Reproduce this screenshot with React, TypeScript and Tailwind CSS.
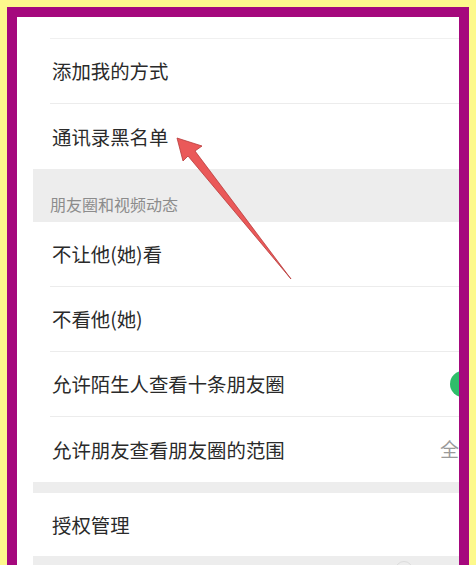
import React from 'react'

const font = { fontFamily: '"Noto Sans CJK SC", "Noto Sans", sans-serif' }

function Row({ label, last, right }: { label: string; last?: boolean; right?: React.ReactNode }) {
  return (
    <div className="bg-white pl-[17px]">
      <div
        className={`flex h-[65px] items-center justify-between pl-[2px] ${
          last ? '' : 'border-b border-[#ececec]'
        }`}
      >
        <span className="text-[19.4px] text-[#2a2a2a]">{label}</span>
        {right}
      </div>
    </div>
  )
}

export default function App() {
  return (
    <div className="relative h-[565px] w-[476px] overflow-hidden bg-[#fdf98c] px-[7px] pt-[7px]" style={font}>
      <div className="h-full bg-[#a5087d] px-[10px] pt-[10px]">
        <div className="h-full overflow-hidden bg-white pl-[16px]">
          {/* partial row at the top */}
          <div className="bg-white pl-[17px]">
            <div className="h-[22px] border-b border-[#f0f0f0]" />
          </div>
          <Row label="添加我的方式" />
          <Row label="通讯录黑名单" last />

          <div className="flex h-[53px] items-end bg-[#ededed] pb-[6px] pl-[17px]">
            <span className="text-[16px] text-[#8c8c8c]">朋友圈和视频动态</span>
          </div>

          <Row label="不让他(她)看" />
          <Row label="不看他(她)" />
          <Row
            label="允许陌生人查看十条朋友圈"
            right={<div className="mr-[-43px] h-[26px] w-[52px] shrink-0 rounded-full bg-[#2fbe6a]" />}
          />
          <Row
            label="允许朋友查看朋友圈的范围"
            last
            right={
              <span className="mr-[-19px] shrink-0 whitespace-nowrap text-[19px] text-[#9a9a9a]">全部</span>
            }
          />

          <div className="h-[11px] bg-[#ededed]" />

          <div className="bg-white pl-[17px]">
            <div className="flex h-[63px] items-center pl-[2px]">
              <span className="text-[19.4px] text-[#2a2a2a]">授权管理</span>
            </div>
          </div>

          <div className="relative h-[40px] bg-[#ededed]">
            <div className="absolute left-[362px] top-[5px] h-[18px] w-[18px] rounded-full border border-[#dcdcdc]" />
          </div>
        </div>
      </div>

      {/* red annotation arrow */}
      <svg className="pointer-events-none absolute inset-0" width="476" height="565" viewBox="0 0 476 565">
        <polygon
          points="177,138 202,146 195,151 291,279 188,156 183,161"
          fill="#ea5959"
          stroke="#b83a3a"
          strokeWidth="0.8"
          strokeLinejoin="round"
        />
      </svg>
    </div>
  )
}
